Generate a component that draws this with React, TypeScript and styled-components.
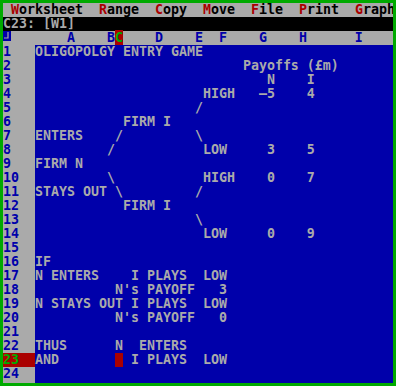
import React from "react"
import styled, { createGlobalStyle } from "styled-components"

const GRAY = "#aaaaaa"
const BLUE = "#0000aa"
const RED = "#aa0000"
const GREEN = "#00aa00"

const GlobalStyle = createGlobalStyle`
  html, body { margin: 0; padding: 0; background: #000; }
  body { font-family: "DejaVu Sans Mono", "Liberation Mono", monospace; }
`

type tSeg = [number, string]

const WIDTH = 44
const CUR_ROW = 23
const CUR_COL = 10

// lay text runs into a fixed width character line
const lineOf = (segs: tSeg[]) => {
  const chars = Array(WIDTH).fill(" ")
  segs.forEach(([col, text]) => {
    ;[...text].forEach((ch, i) => { if (col + i < WIDTH) chars[col + i] = ch })
  })
  return chars.join("").replace(/\s+$/, "")
}

const SHEET: tSeg[][] = [
  [[0, "OLIGOPOLGY ENTRY GAME"]],
  [[26, "Payoffs (£m)"]],
  [[29, "N"], [34, "I"]],
  [[21, "HIGH"], [28, "–5"], [34, "4"]],
  [[20, "/"]],
  [[11, "FIRM I"]],
  [[0, "ENTERS"], [10, "/"], [20, "\\"]],
  [[9, "/"], [21, "LOW"], [29, "3"], [34, "5"]],
  [[0, "FIRM N"]],
  [[9, "\\"], [21, "HIGH"], [29, "0"], [34, "7"]],
  [[0, "STAYS OUT"], [10, "\\"], [20, "/"]],
  [[11, "FIRM I"]],
  [[20, "\\"]],
  [[21, "LOW"], [29, "0"], [34, "9"]],
  [],
  [[0, "IF"]],
  [[0, "N ENTERS"], [12, "I PLAYS"], [21, "LOW"]],
  [[10, "N's PAYOFF"], [23, "3"]],
  [[0, "N STAYS OUT I PLAYS"], [21, "LOW"]],
  [[10, "N's PAYOFF"], [23, "0"]],
  [],
  [[0, "THUS"], [10, "N"], [13, "ENTERS"]],
  [[0, "AND"], [10, " "], [12, "I PLAYS"], [21, "LOW"]],
  [],
]

const COLUMNS: tSeg[] = [[4, "A"], [9, "B"], [10, "C"], [15, "D"], [20, "E"], [23, "F"], [28, "G"], [33, "H"], [40, "I"]]

const MENU = ["Worksheet", "Range", "Copy", "Move", "File", "Print", "Graph"]

export default function App() {
  const header = lineOf(COLUMNS)

  return (<>
    <GlobalStyle />
    <Screen>
      <MenuBar>
        {MENU.map(item => (
          <MenuItem key={item}>
            <Hot>{item[0]}</Hot>{item.slice(1)}
          </MenuItem>
        ))}
      </MenuBar>

      <StatusLine>C23: [W1]</StatusLine>

      <HeaderRow>
        <Corner>
          <svg width="8" height="10" viewBox="0 0 8 10">
            <rect width="8" height="10" fill={BLUE} />
            <path d="M5 1 V7 H1" stroke={GRAY} strokeWidth="1.2" fill="none" />
          </svg>
        </Corner>
        <Letters>
          {header.slice(0, CUR_COL)}
          <ColCursor>{header[CUR_COL]}</ColCursor>
          {header.slice(CUR_COL + 1)}
        </Letters>
      </HeaderRow>

      <Body>
        <Gutter>
          {SHEET.map((_, i) => (
            <RowNum key={i} $active={i + 1 === CUR_ROW}>{i + 1}</RowNum>
          ))}
        </Gutter>
        <Cells>
          {SHEET.map((segs, i) => {
            const text = lineOf(segs)
            if (i + 1 !== CUR_ROW) return <Line key={i}>{text}</Line>
            return (
              <Line key={i}>
                {text.slice(0, CUR_COL)}
                <Cursor />
                {text.slice(CUR_COL + 1)}
              </Line>
            )
          })}
        </Cells>
      </Body>
    </Screen>
  </>)
}

const Screen = styled.div`
  width: 396px;
  height: 386px;
  box-sizing: border-box;
  border: 3px solid ${GREEN};
  display: flex;
  flex-direction: column;
  overflow: hidden;
  font-family: "DejaVu Sans Mono", "Liberation Mono", monospace;
  font-size: 13.29px;
  font-weight: bold;
  line-height: 14px;
  white-space: pre;
`

const MenuBar = styled.div`
  height: 14px;
  flex: none;
  display: flex;
  gap: 16px;
  padding-left: 8px;
  background: ${GRAY};
  color: #000;
  overflow: hidden;
`

const MenuItem = styled.span`
  flex: none;
`

const Hot = styled.span`
  color: ${RED};
`

const StatusLine = styled.div`
  height: 14px;
  flex: none;
  background: #000;
  color: ${GRAY};
`

const HeaderRow = styled.div`
  height: 14px;
  flex: none;
  display: flex;
  background: ${GRAY};
  color: ${BLUE};
`

const Corner = styled.div`
  width: 32px;
  flex: none;
  svg { display: block; }
`

const Letters = styled.div`
  flex: 1;
`

const ColCursor = styled.span`
  background: ${RED};
  color: ${GREEN};
`

const Body = styled.div`
  flex: 1;
  display: flex;
  min-height: 0;
`

const Gutter = styled.div`
  width: 32px;
  flex: none;
  background: ${GRAY};
  display: flex;
  flex-direction: column;
`

const RowNum = styled.div<{ $active?: boolean }>`
  height: 14px;
  background: ${p => p.$active ? RED : "transparent"};
  color: ${p => p.$active ? GREEN : BLUE};
`

const Cells = styled.div`
  flex: 1;
  background: ${BLUE};
  color: ${GRAY};
`

const Line = styled.div`
  height: 14px;
`

const Cursor = styled.span`
  display: inline-block;
  width: 8px;
  height: 14px;
  vertical-align: top;
  background: ${RED};
`
